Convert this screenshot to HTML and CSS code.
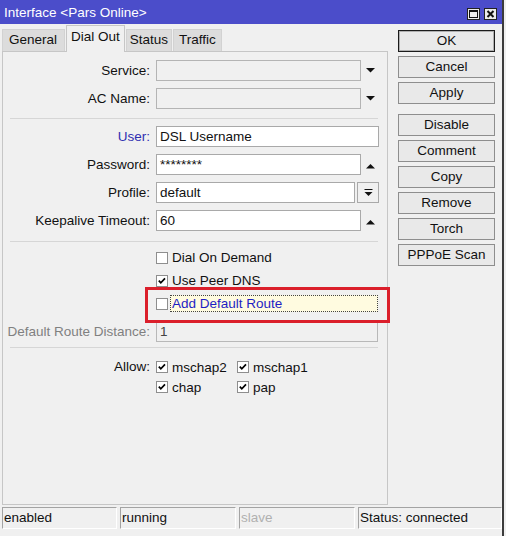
FILE: index.html
```html
<!DOCTYPE html>
<html>
<head>
<meta charset="utf-8">
<title>Interface &lt;Pars Online&gt;</title>
<link rel="stylesheet" href="styles.css">
</head>
<body>
<div class="window">
  <div class="titlebar">
    <span class="title">Interface &lt;Pars Online&gt;</span>
    <span class="tbtns">
      <span class="tbtn"><svg width="11" height="10" viewBox="0 0 11 10"><rect x="1.5" y="1.5" width="8" height="7" fill="none" stroke="#111" stroke-width="1"/><rect x="1" y="1" width="9" height="2" fill="#111"/></svg></span>
      <span class="tbtn"><svg width="11" height="10" viewBox="0 0 11 10"><path d="M2.5 2 L8.5 8 M8.5 2 L2.5 8" stroke="#111" stroke-width="2"/></svg></span>
    </span>
  </div>
  <div class="main">
    <div class="left">
      <div class="tabs">
        <div class="tab general">General</div>
        <div class="tab active">Dial Out</div>
        <div class="tab status">Status</div>
        <div class="tab traffic">Traffic</div>
      </div>
      <div class="panel">
        <div class="row first">
          <span class="lbl">Service:</span>
          <span class="field short inactive"></span>
          <span class="spin"><svg width="9" height="5" viewBox="0 0 9 5"><polygon points="0,0 9,0 4.5,4.5" fill="#111"/></svg></span>
        </div>
        <div class="row">
          <span class="lbl">AC Name:</span>
          <span class="field short inactive"></span>
          <span class="spin"><svg width="9" height="5" viewBox="0 0 9 5"><polygon points="0,0 9,0 4.5,4.5" fill="#111"/></svg></span>
        </div>
        <div class="sep"></div>
        <div class="row after-sep">
          <span class="lbl link">User:</span>
          <span class="field long">DSL Username</span>
        </div>
        <div class="row">
          <span class="lbl">Password:</span>
          <span class="field short">********</span>
          <span class="spin up"><svg width="9" height="5" viewBox="0 0 9 5"><polygon points="0,4.5 9,4.5 4.5,0" fill="#111"/></svg></span>
        </div>
        <div class="row">
          <span class="lbl">Profile:</span>
          <span class="field combo">default</span>
          <span class="ddbtn"><svg width="9" height="8" viewBox="0 0 9 8"><rect x="0.5" y="0" width="8" height="1" fill="#111"/><polygon points="0.5,3 8.5,3 4.5,7" fill="#111"/></svg></span>
        </div>
        <div class="row">
          <span class="lbl">Keepalive Timeout:</span>
          <span class="field short">60</span>
          <span class="spin up"><svg width="9" height="5" viewBox="0 0 9 5"><polygon points="0,4.5 9,4.5 4.5,0" fill="#111"/></svg></span>
        </div>
        <div class="sep wide"></div>
        <div class="crow first">
          <span class="cb"></span>
          <span class="ctext">Dial On Demand</span>
        </div>
        <div class="crow">
          <span class="cb"><svg width="10" height="10" viewBox="0 0 10 10"><polyline points="1.8,4.6 3.8,6.8 8,2.4" fill="none" stroke="#000" stroke-width="1.7"/></svg></span>
          <span class="ctext">Use Peer DNS</span>
        </div>
        <div class="crow marked">
          <span class="cb"></span>
          <span class="focus">Add Default Route</span>
        </div>
        <div class="row dim">
          <span class="lbl">Default Route Distance:</span>
          <span class="field long disabled">1</span>
        </div>
        <div class="sep thin"></div>
        <div class="allow">
          <span class="lbl">Allow:</span>
          <span class="citem"><span class="cb"><svg width="10" height="10" viewBox="0 0 10 10"><polyline points="1.8,4.6 3.8,6.8 8,2.4" fill="none" stroke="#000" stroke-width="1.7"/></svg></span><span class="ctext">mschap2</span></span>
          <span class="citem"><span class="cb"><svg width="10" height="10" viewBox="0 0 10 10"><polyline points="1.8,4.6 3.8,6.8 8,2.4" fill="none" stroke="#000" stroke-width="1.7"/></svg></span><span class="ctext">mschap1</span></span>
          <span></span>
          <span class="citem"><span class="cb"><svg width="10" height="10" viewBox="0 0 10 10"><polyline points="1.8,4.6 3.8,6.8 8,2.4" fill="none" stroke="#000" stroke-width="1.7"/></svg></span><span class="ctext">chap</span></span>
          <span class="citem"><span class="cb"><svg width="10" height="10" viewBox="0 0 10 10"><polyline points="1.8,4.6 3.8,6.8 8,2.4" fill="none" stroke="#000" stroke-width="1.7"/></svg></span><span class="ctext">pap</span></span>
        </div>
      </div>
    </div>
    <div class="buttons">
      <div class="btn default">OK</div>
      <div class="btn">Cancel</div>
      <div class="btn">Apply</div>
      <div class="btn spaced">Disable</div>
      <div class="btn">Comment</div>
      <div class="btn">Copy</div>
      <div class="btn">Remove</div>
      <div class="btn">Torch</div>
      <div class="btn">PPPoE Scan</div>
    </div>
  </div>
  <div class="statusbar">
    <div class="cell">enabled</div>
    <div class="cell">running</div>
    <div class="cell muted">slave</div>
    <div class="cell">Status: connected</div>
  </div>
</div>
</body>
</html>
```

FILE: styles.css
```css
* { box-sizing: border-box; }
html, body { margin: 0; padding: 0; }
body {
  background: #f0f0f0;
  font-family: "Liberation Sans", Arial, sans-serif;
  font-size: 13.5px;
  color: #111;
  width: 506px;
  height: 536px;
  overflow: hidden;
}
.window {
  width: 504px;
  height: 536px;
  border-right: 2px solid #3c3c3c;
  background: #f0f0f0;
  display: flex;
  flex-direction: column;
}
.titlebar {
  height: 24px;
  background: #4b4dca;
  color: #fff;
  display: flex;
  justify-content: space-between;
  align-items: flex-start;
  padding: 0 5px 0 4px;
  flex: none;
}
.title { padding-top: 5px; line-height: 15px; }
.tbtns { display: flex; gap: 4px; margin-top: 8px; }
.tbtn {
  width: 13px;
  height: 12px;
  background: #ececec;
  border: 1px solid #222;
  display: flex;
  align-items: center;
  justify-content: center;
}
.main { display: flex; height: 481px; flex: none; }
.left { margin-left: 2px; width: 386px; display: flex; flex-direction: column; }
.tabs { height: 27px; display: flex; align-items: flex-end; flex: none; }
.tab {
  height: 22px;
  padding: 0 6px;
  background: #dcdcdc;
  border: 1px solid #d2d2d2;
  border-bottom: none;
  line-height: 20px;
  white-space: nowrap;
}
.tab.general { padding: 0 7px 0 6px; }
.tab.status { padding: 0 3px; margin-left: 1px; }
.tab.traffic { padding: 0 5px; margin-left: 1px; }
.tab.active {
  height: 27px;
  padding: 0 4px;
  margin-left: 1px;
  margin-bottom: -1px;
  background: #f0f0f0;
  border-color: #c6c6c6;
  position: relative;
  z-index: 1;
  line-height: 22px;
}
.panel {
  flex: 1;
  border: 1px solid #c6c6c6;
  padding-top: 8px;
}
.row { display: flex; align-items: center; height: 21px; margin-top: 7px; }
.row.first { margin-top: 0; }
.lbl { width: 153px; padding-right: 6px; text-align: right; white-space: nowrap; flex: none; }
.lbl.link { color: #2f2fb0; }
.field {
  height: 21px;
  border: 1px solid #a9a9a9;
  background: #fff;
  padding-left: 3px;
  line-height: 19px;
  white-space: nowrap;
  flex: none;
}
.field.inactive { background: #f0f0f0; border-color: #b4b4b4; }
.field.short { width: 205px; }
.field.long { width: 223px; }
.field.combo { width: 199px; }
.field.disabled { background: #f0f0f0; border-color: #b8b8b8; color: #444; width: 222px; }
.spin { width: 18px; display: flex; justify-content: center; align-items: center; }
.spin.up { padding-top: 3px; }
.ddbtn {
  margin-left: 2px;
  width: 22px;
  height: 21px;
  border: 1px solid #a9a9a9;
  background: #f0f0f0;
  display: flex;
  align-items: center;
  justify-content: center;
}
.sep { margin: 9px 0 0 7px; width: 368px; height: 1px; background: #d6d6d6; }
.sep.wide { margin-top: 10px; }
.sep.thin { margin-top: 5px; }
.row.after-sep { margin-top: 7px; }
.crow { display: flex; align-items: center; height: 23px; padding-left: 153px; }
.crow.first { margin-top: 4px; }
.crow.marked { position: relative; }
.crow.marked::after {
  content: "";
  position: absolute;
  left: 142px;
  top: -5px;
  width: 239px;
  height: 30px;
  border: 3px solid #db1f2b;
}
.cb {
  width: 12px;
  height: 12px;
  border: 1px solid #8e8e8e;
  background: #fff;
  display: flex;
  align-items: center;
  justify-content: center;
  flex: none;
}
.ctext { margin-left: 4px; white-space: nowrap; }
.focus {
  margin-left: 2px;
  width: 208px;
  height: 17px;
  padding-left: 1px;
  border: 1px dotted #444;
  background: #fffbe0;
  color: #1e1ec4;
  line-height: 15px;
  white-space: nowrap;
}
.row.dim { margin-top: 6px; }
.row.dim .lbl { color: #808080; }
.allow {
  display: grid;
  grid-template-columns: 153px 81px auto;
  grid-auto-rows: 20px;
  margin-top: 9px;
  align-items: center;
}
.allow .lbl { line-height: 20px; }
.citem { display: flex; align-items: center; }
.buttons {
  margin-left: 10px;
  padding-top: 6px;
  width: 97px;
  display: flex;
  flex-direction: column;
  gap: 4px;
}
.btn {
  height: 22px;
  border: 1px solid #8e8e8e;
  background: #e9e9e9;
  text-align: center;
  line-height: 20px;
  white-space: nowrap;
}
.btn.default { border-color: #1b1b1b; box-shadow: inset 0 0 0 1px #b0b0b0; }
.btn.spaced { margin-top: 6px; }
.statusbar {
  display: grid;
  grid-template-columns: 115px 116px 116px 1fr;
  column-gap: 3px;
  margin: 2px 0 0 2px;
  height: 22px;
  flex: none;
}
.cell {
  border: 1px solid;
  border-color: #a3a3a3 #ffffff #ffffff #a3a3a3;
  padding-left: 1px;
  line-height: 20px;
  white-space: nowrap;
}
.cell.muted { color: #b0b0b0; }
```
